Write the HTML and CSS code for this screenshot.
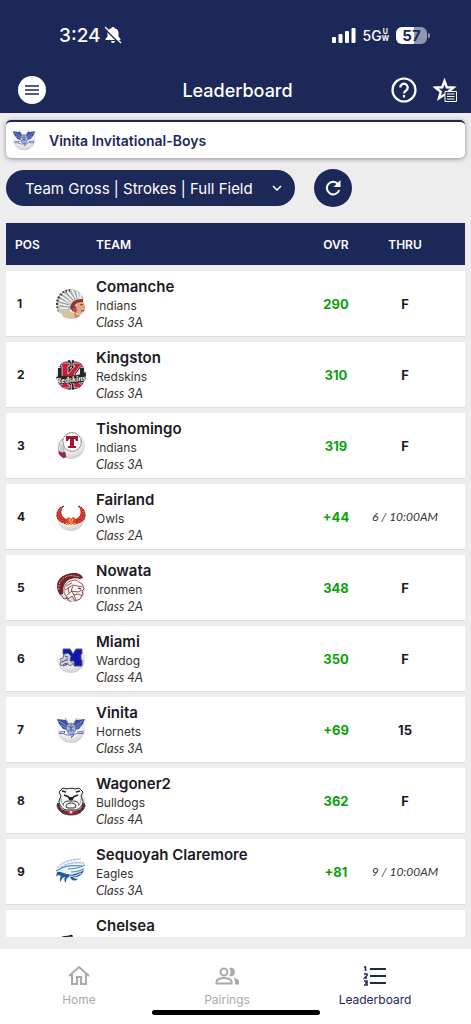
FILE: index.html
```html
<!DOCTYPE html>
<html lang="en">

<head>
    <meta charset="UTF-8">
    <meta name="viewport" content="width=device-width, initial-scale=1.0">
    <title>Leaderboard</title>
    <link rel="stylesheet" href="styles.css">
</head>

<body>
    <!-- shared shapes -->
    <svg class="defs" aria-hidden="true">
        <defs>
            <radialGradient id="ball" cx="45%" cy="30%" r="70%">
                <stop offset="50%" stop-color="#fff" />
                <stop offset="100%" stop-color="#cfcfcf" />
            </radialGradient>
            <clipPath id="round">
                <circle cx="15" cy="15" r="15" />
            </clipPath>
        </defs>
        <symbol id="hornet" viewBox="0 0 30 30">
            <circle cx="15" cy="14" r="14" fill="url(#ball)" />
            <path d="M1 4l9 1 3 5-2 5-4-1-4-5zM29 4l-9 1-3 5 2 5 4-1 4-5z" fill="#3c51a3" />
            <path d="M3 6l8 5M5 10l5 3M27 6l-8 5M25 10l-5 3" stroke="#a5b0da" stroke-width=".7" />
            <path d="M9 3l4 6M21 3l-4 6" stroke="#6877af" fill="none" stroke-width=".8" />
            <path d="M11 10l4-2 4 2 1 4-2 4-3 2-3-2-2-4z" fill="#a9b4da" stroke="#5064ac" stroke-width=".8" />
            <path d="M12 11l3 2 3-2M12 16l3-2 3 2M15 9v8" stroke="#3d519d" stroke-width=".8" fill="none" />
            <path d="M3 17l6-.5-1 2H3M21 17l6-.5v2h-5M8 19c4 2 9 1 14-1M15 22l3-2-3 3" stroke="#5b6eb2" fill="none" />
        </symbol>
    </svg>

    <div class="app">
        <header class="top">
            <div class="status">
                <div class="status_left">
                    <span class="clock">3:24</span>
                    <svg width="18" height="18" viewBox="0 0 18 18">
                        <path d="M9 1c-1 0-1.500.6-1.700 1.300C4.500 3 3.500 5 3.500 7v3.500L1.500 13v1h15v-1l-2-2.500V7c0-2-1-4-3.800-4.700C10.500 1.600 10 1 9 1zM7 15h4c0 1.300-.8 2-2 2s-2-.7-2-2z" fill="#fff" />
                        <path d="M0 2l16 16" stroke="#1c2858" stroke-width="1.500" />
                        <path d="M1 1l16 16" stroke="#fff" stroke-width="1.200" />
                    </svg>
                </div>
                <div class="status_right">
                    <svg width="24" height="16" viewBox="0 0 24 16" fill="#fff">
                        <rect x="0" y="10" width="4" height="6" rx="1" />
                        <rect x="6.500" y="7" width="4" height="9" rx="1" />
                        <rect x="13" y="4" width="4" height="12" rx="1" />
                        <rect x="19.500" y="1" width="4" height="15" rx="1" />
                    </svg>
                    <span class="network">5G<span class="band"><span>U</span><span>W</span></span></span>
                    <span class="battery">57</span>
                </div>
            </div>
            <div class="titlebar">
                <button class="menu" aria-label="Menu">
                    <svg width="14" height="10" viewBox="0 0 14 10">
                        <path d="M0 1h14M0 5h14M0 9h14" stroke="#1c2858" stroke-width="1.500" />
                    </svg>
                </button>
                <h1>Leaderboard</h1>
                <div class="actions">
                    <button aria-label="Help">
                        <svg width="26" height="26" viewBox="0 0 26 26" fill="none" stroke="#fff" stroke-width="2.200">
                            <circle cx="13" cy="13" r="11.500" />
                            <path d="M9.300 10.500a3.700 3.700 0 1 1 5.800 3c-1.400 1-2.100 1.500-2.100 3" />
                            <path d="M13 18v2.500" />
                        </svg>
                    </button>
                    <button aria-label="Favorites">
                        <svg width="24" height="24" viewBox="0 0 24 24">
                            <path d="M11.500 3l2.300 6.300 6.700.3-5.300 4.200 1.800 6.500-5.500-3.700L6 20.300l1.800-6.500-5.300-4.200 6.700-.3z" fill="none" stroke="#fff" stroke-width="2.400" />
                            <path d="M12 13.500h11.500v10H12z" fill="#1c2858" stroke="#fff" />
                            <path d="M14 16h7.500M14 18.500h7.500M14 21h7.500" stroke="#fff" stroke-width="1.200" />
                        </svg>
                    </button>
                </div>
            </div>
        </header>

        <main>
            <div class="event">
                <svg class="event_logo" viewBox="0 0 30 30"><use href="#hornet" /></svg>
                <h2>Vinita Invitational-Boys</h2>
            </div>

            <div class="controls">
                <div class="picker">
                    <select aria-label="Leaderboard view">
                        <option>Team Gross | Strokes | Full Field</option>
                    </select>
                    <svg class="chevron" width="10" height="6" viewBox="0 0 10 6">
                        <path d="M1 1l4 4 4-4" fill="none" stroke="#fff" stroke-width="1.500" />
                    </svg>
                </div>
                <button class="refresh" aria-label="Refresh">
                    <svg width="16" height="16" viewBox="0 0 16 16">
                        <path d="M13 4A6.300 6.300 0 1 0 14.200 10" fill="none" stroke="#fff" stroke-width="2" />
                        <path d="M15.500 0v7h-7z" fill="#fff" />
                    </svg>
                </button>
            </div>

            <div class="board">
                <table>
                    <thead>
                        <tr>
                            <th class="pos">POS</th>
                            <th class="logo"></th>
                            <th class="team">TEAM</th>
                            <th class="ovr">OVR</th>
                            <th class="thru">THRU</th>
                        </tr>
                    </thead>
                    <tbody>
                        <tr>
                            <td class="pos">1</td>
                            <td class="logo">
                                <svg viewBox="0 0 30 30">
                                    <g clip-path="url(#round)">
                                        <path d="M16 0C7 0 1 6 1 14l1 9 6 3 6-4 4-8 10-4c-2-6-6-10-12-10z" fill="#c3c5c6" />
                                        <path d="M1 23C-1 12 2 3 14 1" fill="none" stroke="#3a302d" stroke-width="3" stroke-dasharray="2 1.500" />
                                        <path d="M4 7l11 7M3 11l11 4M3 15l10 2M4 19l8 0M7 4l9 8M11 2l7 8M16 1l4 8M21 2l1 7M25 4l-1 6" stroke="#f4f4f4" stroke-width="1.500" />
                                        <path d="M4 9l10 6M4 13l9 3M4 17l9 1M6 6l9 7M9 3l8 8M14 2l5 8M19 2l2 7" stroke="#7d8286" stroke-width=".7" />
                                        <path d="M21 14l6-2 2 5v5l-5 4-6-3z" fill="#e0a886" />
                                        <path d="M14 19c1-6 5-9 13-9v3c-6 0-8 2-9 6l-1 4z" fill="#8f3238" />
                                        <path d="M18 16l2 1 1 5-2 2-2-2z" fill="#b54b49" />
                                        <path d="M5 23l9-1 5 3 1 5H8z" fill="#dcc295" />
                                        <path d="M18 23l4 3 2 0-1 4h-4z" fill="#c98969" />
                                        <path d="M24 16l3-.5M25 22l3-.5" stroke="#5f362e" stroke-width=".9" />
                                    </g>
                                </svg>
                            </td>
                            <td class="team">
                                <div class="name">Comanche</div>
                                <div class="mascot">Indians</div>
                                <div class="class">Class 3A</div>
                            </td>
                            <td class="ovr">290</td>
                            <td class="thru">F</td>
                        </tr>
                        <tr>
                            <td class="pos">2</td>
                            <td class="logo">
                                <svg viewBox="0 0 30 30">
                                    <g clip-path="url(#round)">
                                        <circle cx="15" cy="15" r="15" fill="#e8e8e8" />
                                        <path d="M12 0h6v30h-6zM2 8h4v14H2zM24 8h4v14h-4z" fill="#272727" />
                                        <path d="M14 0h2v30h-2z" fill="#ddd" />
                                        <path d="M5 3h9v3h-2v8l7-8h-2V3h10v3h-3l-6 8 6 10h3v4h-9v-3l-5-7-1 2v5h2v3H4v-3h2V6H5z" fill="#c71e36" stroke="#181818" stroke-width="2.500" />
                                        <path d="M5 3h9v3h-2v8l7-8h-2V3h10v3h-3l-6 8 6 10h3v4h-9v-3l-5-7-1 2v5h2v3H4v-3h2V6H5z" fill="#c71e36" stroke="#fff" stroke-width=".7" />
                                        <path d="M0 17c5-2 9-1 13-1s11-1 17-4v8c-7 3-11 3-16 3S5 24 1 24z" fill="#272727" />
                                    </g>
                                    <text class="redskins" x="0" y="22" transform="rotate(-6 15 20)">Redskins</text>
                                </svg>
                            </td>
                            <td class="team">
                                <div class="name">Kingston</div>
                                <div class="mascot">Redskins</div>
                                <div class="class">Class 3A</div>
                            </td>
                            <td class="ovr">310</td>
                            <td class="thru">F</td>
                        </tr>
                        <tr>
                            <td class="pos">3</td>
                            <td class="logo">
                                <svg viewBox="0 0 30 30">
                                    <circle cx="15" cy="14" r="14" fill="url(#ball)" />
                                    <circle cx="16" cy="11" r="9.500" fill="#fff" stroke="#999" />
                                    <circle cx="16" cy="11" r="9" fill="none" stroke="#c77981" stroke-width=".8" stroke-dasharray="1 2" />
                                    <path d="M6 8c-3 4-4 10-3 14l4 1c2-4 1-10-1-15z" fill="#eee" stroke="#999" stroke-width=".8" />
                                    <path d="M5 13l0 8M7 13v9" stroke="#999" stroke-width=".7" />
                                    <path d="M3 20l3 2 3-1 1 5-3 1-4-4z" fill="#a8213c" stroke="#5a3a40" stroke-width=".5" />
                                    <path d="M10 5h12v5h-2l-1-2h-1v7h2v2h-8v-2h2V8h-1l-1 2h-2z" fill="#9f1735" />
                                </svg>
                            </td>
                            <td class="team">
                                <div class="name">Tishomingo</div>
                                <div class="mascot">Indians</div>
                                <div class="class">Class 3A</div>
                            </td>
                            <td class="ovr">319</td>
                            <td class="thru">F</td>
                        </tr>
                        <tr>
                            <td class="pos">4</td>
                            <td class="logo">
                                <svg viewBox="0 0 30 30">
                                    <circle cx="15" cy="15" r="14" fill="url(#ball)" />
                                    <path d="M8 4C3 5 0 10 1 15c1 4 5 6 11 7h6c6-1 10-3 11-7 1-5-2-10-7-11 4 5 4 10-2 13l-3-2-2 2-2-2-3 2C4 14 4 9 8 4z" fill="#e53a2c" />
                                    <path d="M8 4C3 5 0 10 1 15c1 4 5 6 11 7M22 4c5 1 8 6 7 11-1 4-5 6-11 7" fill="none" stroke="#5d2720" stroke-dasharray="2 1" />
                                    <path d="M5 8c-1 4 1 8 5 10M25 8c1 4-1 8-5 10M3 12c0 4 3 6 7 7M27 12c0 4-3 6-7 7" fill="none" stroke="#a8251f" stroke-width=".8" />
                                    <path d="M12 16l3 2 3-2-1 5h-4z" fill="#ef7441" />
                                    <path d="M13 18h1M16 18h1" stroke="#fff" />
                                    <path d="M10 22h3M17 22h3M15 20v3" stroke="#d6a42d" stroke-width="2" />
                                </svg>
                            </td>
                            <td class="team">
                                <div class="name">Fairland</div>
                                <div class="mascot">Owls</div>
                                <div class="class">Class 2A</div>
                            </td>
                            <td class="ovr">+44</td>
                            <td class="thru time">6 / 10:00AM</td>
                        </tr>
                        <tr>
                            <td class="pos">5</td>
                            <td class="logo">
                                <svg viewBox="0 0 30 30">
                                    <circle cx="16" cy="16" r="13" fill="url(#ball)" />
                                    <path d="M4 22C-4 10 5 0 18 0c5 0 8 2 9 5l-3 1C14 3 6 9 7 21z" fill="#762127" />
                                    <path d="M3 17C1 9 8 3 15 2.500l9 1.500" fill="none" stroke="#e0c4c4" stroke-width=".8" stroke-dasharray="2 1" />
                                    <path d="M8 20C7 12 12 7 20 7l6 4 2 5-2 2 1 3-3 5-5 2-3-5-4 3z" fill="#fbf8f7" stroke="#7b292c" stroke-width=".8" />
                                    <path d="M9 17l8-5 9 2M17 13l-2 5 7 1 4-2M11 22l5-4 4 9M10 13l6-3M18 22l5-1 3 2M5 22l3 4 4-2M10 25l5 4M12 15l1 5" stroke="#7b292c" stroke-width=".8" fill="none" />
                                    <path d="M22 15l3 1" stroke="#47191b" stroke-width="1.300" />
                                </svg>
                            </td>
                            <td class="team">
                                <div class="name">Nowata</div>
                                <div class="mascot">Ironmen</div>
                                <div class="class">Class 2A</div>
                            </td>
                            <td class="ovr">348</td>
                            <td class="thru">F</td>
                        </tr>
                        <tr>
                            <td class="pos">6</td>
                            <td class="logo">
                                <svg viewBox="0 0 30 30">
                                    <circle cx="15" cy="15" r="14" fill="url(#ball)" />
                                    <path d="M7 5h7l3 5 3-5h6v5h-1v6h1v6h-8v-5h-3l-1 2-3-2v4H7v-4h1v-7H7z" fill="#1017b0" stroke="#555b70" />
                                    <path d="M8 10l4-1 3 3-1 4 3 4-3 2-3-3-3 3-4-1 1-4-1-2 3-1z" fill="#ced2e0" stroke="#4a506b" stroke-width=".8" />
                                    <path d="M9 12l3 1M6 18l4-2M11 14v3M7 21l3-2" stroke="#28305e" stroke-width=".8" />
                                </svg>
                            </td>
                            <td class="team">
                                <div class="name">Miami</div>
                                <div class="mascot">Wardog</div>
                                <div class="class">Class 4A</div>
                            </td>
                            <td class="ovr">350</td>
                            <td class="thru">F</td>
                        </tr>
                        <tr>
                            <td class="pos">7</td>
                            <td class="logo">
                                <svg viewBox="0 0 30 30"><use href="#hornet" /></svg>
                            </td>
                            <td class="team">
                                <div class="name">Vinita</div>
                                <div class="mascot">Hornets</div>
                                <div class="class">Class 3A</div>
                            </td>
                            <td class="ovr">+69</td>
                            <td class="thru">15</td>
                        </tr>
                        <tr>
                            <td class="pos">8</td>
                            <td class="logo">
                                <svg viewBox="0 0 30 30">
                                    <circle cx="15" cy="15" r="14" fill="url(#ball)" />
                                    <path d="M2 17c1 6 6 9 13 9s12-3 13-9l1 3c-2 6-7 9-14 9S3 26 1 20z" fill="#a12335" stroke="#272727" stroke-width=".8" />
                                    <path d="M1 18l3 2M2 23l3-1M6 27l2-3M29 18l-3 2M28 23l-3-1M24 27l-2-3" stroke="#333" stroke-width="1.300" />
                                    <path d="M3 6l4-4 4 1c3-1 5-1 8 0l4-1 4 4-2 4 2 5c0 5-4 8-7 9H10c-3-1-7-4-7-9l2-5z" fill="#f7f7f7" stroke="#232323" />
                                    <path d="M6 5l4 1M24 5l-4 1M8 9l5 2M22 9l-5 2" stroke="#252525" stroke-width="1.500" />
                                    <path d="M12 11h6l-1 3h-4z" fill="#222" />
                                    <path d="M15 14v1M7 19c1-4 4-4 8-4s7 0 8 4M10 21c0-3 2-4 5-4s5 1 5 4l-2 1h-6z" fill="none" stroke="#333" />
                                    <path d="M5 12c0 4 1 6 3 8M25 12c0 4-1 6-3 8" fill="none" stroke="#777" stroke-width=".7" />
                                    <circle cx="15" cy="26" r="2" fill="#eee" stroke="#b02f3d" />
                                </svg>
                            </td>
                            <td class="team">
                                <div class="name">Wagoner2</div>
                                <div class="mascot">Bulldogs</div>
                                <div class="class">Class 4A</div>
                            </td>
                            <td class="ovr">362</td>
                            <td class="thru">F</td>
                        </tr>
                        <tr>
                            <td class="pos">9</td>
                            <td class="logo">
                                <svg viewBox="0 0 30 30">
                                    <path d="M0 14C4 7 12 3 25 2c-2 2-3 2-1 3 3 0 4 1 6 2l-2 3 2 1-3 3 1 2-4 2-2 3-7 2-3-3-4 3z" fill="#edf3f8" />
                                    <path d="M1 11C6 5 14 2 25 2M2 13C9 6 18 5 28 6" stroke="#8fb0d3" fill="none" stroke-dasharray="3 .7" />
                                    <path d="M0 14c7-5 17-6 26-5M12 12c6 0 11-1 17-4M15 15c5 0 9-1 13-3" stroke="#5b8cc0" fill="none" stroke-width="1.100" />
                                    <path d="M1 15c4-1 6 2 11 2 6 1 11-1 16-4-2 5-6 8-11 7 1 1 2 2 5 2-4 3-7 1-8-2-3 0-4 2-4 6-2-2-2-4-1-6-3 0-4 3-4 5-2-2-1-4 0-6-2-1-4-1-5 1z" fill="#225e9f" />
                                    <path d="M4 14c4 0 8 4 13 3M13 19c5 1 9-1 12-3" fill="none" stroke="#fff" />
                                </svg>
                            </td>
                            <td class="team">
                                <div class="name">Sequoyah Claremore</div>
                                <div class="mascot">Eagles</div>
                                <div class="class">Class 3A</div>
                            </td>
                            <td class="ovr">+81</td>
                            <td class="thru time">9 / 10:00AM</td>
                        </tr>
                        <tr>
                            <td class="pos"></td>
                            <td class="logo">
                                <svg viewBox="0 0 30 30">
                                    <path d="M6 9l7-1 3-1v2l3 1-3 5-9-3z" fill="#367155" stroke="#151515" />
                                </svg>
                            </td>
                            <td class="team">
                                <div class="name">Chelsea</div>
                            </td>
                            <td class="ovr"></td>
                            <td class="thru"></td>
                        </tr>
                    </tbody>
                </table>
            </div>
        </main>

        <nav class="tabs">
            <a href="#">
                <svg width="24" height="24" viewBox="0 0 24 24" fill="none" stroke="currentColor" stroke-width="2">
                    <path d="M2 12L12 3l10 9M5 10v10h5v-7h4v7h5V10" />
                </svg>
                Home
            </a>
            <a href="#">
                <svg width="24" height="24" viewBox="0 0 24 24" fill="none" stroke="currentColor" stroke-width="2">
                    <circle cx="9" cy="8" r="3.500" />
                    <path d="M1.500 19.500v-2c0-2 4-3.500 7.500-3.500s7.500 1.500 7.500 3.500v2z" />
                    <path d="M14 4c4-1 6 1 6 4s-2 5-6 4c2-2 2-6 0-8zM18 13.500c3 .8 6 2 6 4v3h-4v-3c0-1.500-.7-3-2-4z" fill="currentColor" stroke="none" />
                </svg>
                Pairings
            </a>
            <a href="#" class="active">
                <svg width="24" height="24" viewBox="0 0 24 24" fill="none" stroke="currentColor">
                    <path d="M7 5h16M7 12h16M7 19h16" stroke-width="2.200" />
                    <path d="M1 3h1.500v4M1 10h3v1.500L1.500 14H4M1 17h3v4H1M2 19h2" stroke-width="1.500" />
                </svg>
                Leaderboard
            </a>
            <span class="home_bar"></span>
        </nav>
    </div>
</body>

</html>
```
FILE: styles.css
```css
* {
    box-sizing: border-box;
}

body {
    margin: 0;
    font-family: Inter, "Liberation Sans", sans-serif;
    color: #1b1b1f;
    background-color: #ededed;
}

button {
    padding: 0;
    border: 0;
    background: none;
    display: flex;
    align-items: center;
    justify-content: center;
}

h1,
h2 {
    margin: 0;
}

svg {
    display: block;
}

.defs {
    position: absolute;
    width: 0;
    height: 0;
}

.app {
    height: 100vh;
    display: flex;
    flex-direction: column;
}

/* header */
.top {
    background-color: #1c2858;
    color: #fff;
    padding-bottom: 3px;
}

.status {
    height: 70px;
    padding: 0 44px 0 59px;
    display: flex;
    align-items: center;
    justify-content: space-between;
}

.status_left,
.status_right {
    display: flex;
    align-items: center;
}

.status_left {
    gap: 3px;
}

.status_right {
    gap: 7px;
}

.clock {
    font-size: 19px;
    font-weight: 500;
}

.network {
    display: flex;
    align-items: center;
    font-size: 14px;
    font-weight: 500;
}

.band {
    display: flex;
    flex-direction: column;
    font-size: 7px;
    line-height: 7px;
    font-weight: 700;
    text-align: center;
}

.battery {
    position: relative;
    width: 31px;
    height: 17px;
    border-radius: 6px;
    background: linear-gradient(to right, #fff 57%, #9297b0 57%);
    color: #1c2858;
    font-size: 15px;
    line-height: 17px;
    font-weight: 700;
    text-align: center;
}

.battery::after {
    content: "";
    position: absolute;
    right: -3px;
    top: 6px;
    width: 2px;
    height: 5px;
    border-radius: 0 2px 2px 0;
    background-color: #9297b0;
}

.titlebar {
    height: 40px;
    padding: 0 14px 0 18px;
    display: grid;
    grid-template-columns: 1fr auto 1fr;
    align-items: center;
}

.titlebar h1 {
    font-size: 18px;
    font-weight: 500;
}

.menu {
    width: 28px;
    height: 28px;
    border-radius: 50%;
    background-color: #fff;
}

.actions {
    display: flex;
    justify-content: flex-end;
    align-items: center;
    gap: 16px;
}

/* content */
main {
    flex: 1;
    min-height: 0;
    padding: 7px 6px 12px;
    display: flex;
    flex-direction: column;
}

.event {
    height: 38px;
    flex-shrink: 0;
    padding: 0 6px;
    display: flex;
    align-items: center;
    gap: 13px;
    background-color: #fff;
    border-top: 2px solid #1c2858;
    border-radius: 5px;
    box-shadow: 0 1px 5px rgba(0, 0, 0, 0.4);
}

.event_logo {
    width: 24px;
    height: 24px;
}

.event h2 {
    font-size: 14px;
    font-weight: 600;
    color: #1c2858;
}

.controls {
    display: flex;
    align-items: center;
    gap: 19px;
    margin: 11px 0 10px;
}

.picker {
    position: relative;
}

.picker select {
    appearance: none;
    width: 289px;
    height: 36px;
    padding: 0 36px 0 19px;
    border: 0;
    border-radius: 18px;
    background-color: #1c2858;
    color: #fff;
    font-family: inherit;
    font-size: 15px;
    font-weight: 400;
}

.chevron {
    position: absolute;
    right: 13px;
    top: 15px;
    pointer-events: none;
}

.refresh {
    width: 38px;
    height: 38px;
    border-radius: 50%;
    background-color: #1c2858;
}

/* leaderboard table */
.board {
    flex: 1;
    min-height: 0;
    overflow: auto;
    scrollbar-width: none;
}

table {
    width: 100%;
    table-layout: fixed;
    border-collapse: separate;
    border-spacing: 0 6px;
}

th {
    height: 42px;
    padding: 0;
    background-color: #1c2858;
    color: #fff;
    font-size: 12px;
    font-weight: 600;
}

td {
    height: 65px;
    padding: 0;
    background-color: #fff;
    box-shadow: 0 1px 0 #dcdcdc;
    font-size: 13px;
    font-weight: 700;
}

.pos {
    width: 50px;
    text-align: left;
}

th.pos {
    padding-left: 9px;
}

td.pos {
    padding-left: 11px;
    font-size: 12px;
}

.logo {
    width: 40px;
}

.logo svg {
    width: 30px;
    height: 30px;
}

.redskins {
    font-family: "Liberation Serif", serif;
    font-size: 8px;
    font-weight: 700;
    font-style: italic;
    fill: #fff;
}

.team {
    text-align: left;
    font-weight: 400;
}

td.team {
    padding-top: 6px;
    vertical-align: top;
}

.name {
    font-size: 15px;
    line-height: 20px;
    font-weight: 600;
}

.mascot {
    font-size: 12px;
    line-height: 17px;
    color: #333;
}

.class {
    font-family: Lato, "Noto Sans", sans-serif;
    font-size: 13px;
    line-height: 16px;
    font-style: italic;
    color: #333;
}

th.team {
    font-weight: 600;
}

.ovr {
    width: 70px;
    text-align: center;
}

td.ovr {
    color: #0ca10c;
}

.thru {
    width: 94px;
    padding-right: 26px;
    text-align: center;
    white-space: nowrap;
}

.time {
    font-family: Lato, "Noto Sans", sans-serif;
    font-size: 12px;
    font-weight: 400;
    font-style: italic;
    color: #333;
}

/* bottom tabs */
.tabs {
    position: relative;
    height: 75px;
    padding: 15px 22px 0 5px;
    display: grid;
    grid-template-columns: repeat(3, 1fr);
    align-items: start;
    background-color: #fff;
}

.tabs a {
    display: flex;
    flex-direction: column;
    align-items: center;
    gap: 4px;
    color: #aaa;
    font-size: 12px;
    line-height: 16px;
    text-decoration: none;
}

.tabs .active {
    color: #1c2858;
}

.home_bar {
    position: absolute;
    left: 50%;
    bottom: 9px;
    width: 168px;
    height: 5px;
    border-radius: 3px;
    background-color: #000;
    transform: translateX(-50%);
}
```
